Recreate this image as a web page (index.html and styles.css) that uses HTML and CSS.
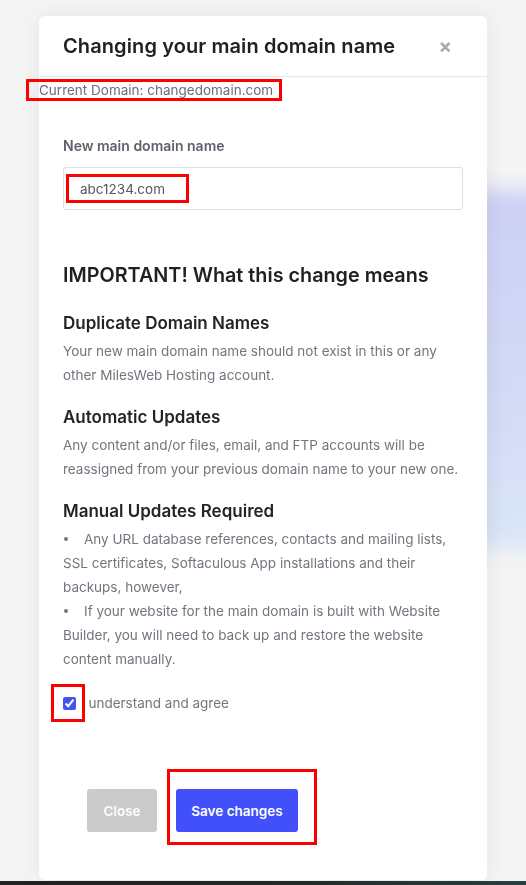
FILE: index.html
```html
<!DOCTYPE html>
<html lang="en">
<head>
    <meta charset="UTF-8">
    <meta name="viewport" content="width=device-width, initial-scale=1.0">
    <title>Change main domain</title>
    <link rel="stylesheet" href="styles.css">
</head>
<body>
    <!-- blurred shape behind the dialog -->
    <div class="backdrop-blob"></div>

    <div class="modal">
        <div class="modal-header">
            <h1 class="modal-title">Changing your main domain name</h1>
            <button class="close-btn" type="button">&times;</button>
        </div>

        <div class="current-domain">
            <span class="mark mark-domain">Current Domain: changedomain.com</span>
        </div>

        <div class="modal-body">
            <label class="field-label" for="newDomain">New main domain name</label>
            <div class="input-wrap mark mark-input">
                <input type="text" id="newDomain" class="field-input" value="abc1234.com">
            </div>

            <h2 class="important">IMPORTANT! What this change means</h2>

            <h3 class="section-title">Duplicate Domain Names</h3>
            <p class="section-text">Your new main domain name should not exist in this or any other MilesWeb Hosting account.</p>

            <h3 class="section-title">Automatic Updates</h3>
            <p class="section-text">Any content and/or files, email, and FTP accounts will be reassigned from your previous domain name to your new one.</p>

            <h3 class="section-title">Manual Updates Required</h3>
            <div class="section-text">
                <div><span class="dot"></span>Any URL database references, contacts and mailing lists, SSL certificates, Softaculous App installations and their backups, however,</div>
                <div><span class="dot"></span>If your website for the main domain is built with Website Builder, you will need to back up and restore the website content manually.</div>
            </div>

            <label class="agree mark mark-check">
                <input type="checkbox" checked>
                <span>I understand and agree</span>
            </label>
        </div>

        <div class="modal-footer">
            <button class="btn btn-close" type="button">Close</button>
            <button class="btn btn-save mark mark-save" type="button">Save changes</button>
        </div>
    </div>

    <div class="bottom-bar"></div>
</body>
</html>
```

FILE: styles.css
```css
body {
    margin: 0;
    height: 885px;
    overflow: hidden;
    background-color: #f5f5f6;
    font-family: Inter, "Liberation Sans", sans-serif;
    color: #222;
}

.backdrop-blob {
    position: fixed;
    left: 470px;
    top: 190px;
    width: 120px;
    height: 360px;
    background: linear-gradient(180deg, #cdd0f5 0%, #d3dbf6 60%, #dbe6f7 100%);
    filter: blur(10px);
}

.modal {
    position: relative;
    margin: 16px 0 0 39px;
    width: 448px;
    height: 864px;
    background-color: #fff;
    border-radius: 6px;
    box-shadow: 0 0 24px rgba(0, 0, 0, 0.08);
}

.modal-header {
    display: flex;
    align-items: center;
    justify-content: space-between;
    height: 60px;
    padding: 0 35px 0 24px;
    border-bottom: 1px solid #e6e6e8;
}

.modal-title {
    margin: 0;
    font-size: 20px;
    font-weight: 600;
    color: #1f1f24;
    letter-spacing: 0.1px;
}

.close-btn {
    border: none;
    background: none;
    padding: 0;
    font-family: inherit;
    font-size: 20px;
    font-weight: 700;
    color: #acacb0;
    line-height: 1;
    cursor: pointer;
}

.current-domain {
    margin-top: 3px;
    line-height: 20px;
    font-size: 13.5px;
    color: #6b6e78;
}

/* red annotation frames */
.mark {
    position: relative;
}

.mark::after {
    content: "";
    position: absolute;
    border: 3px solid #f00;
    pointer-events: none;
}

.mark-domain {
    display: inline-block;
}

.mark-domain::after {
    left: -13px;
    right: -9px;
    top: -1px;
    bottom: -1px;
}

.mark-input::after {
    left: 3px;
    top: 7px;
    width: 117px;
    height: 23px;
}

.mark-check::after {
    left: -12px;
    top: -9px;
    width: 28px;
    height: 32px;
}

.mark-save::after {
    left: -9px;
    right: -19px;
    top: -20px;
    bottom: -13px;
}

.modal-body {
    padding: 36px 24px 0 24px;
}

.field-label {
    display: block;
    font-size: 14px;
    font-weight: 600;
    line-height: 20px;
    color: #5f616b;
}

.input-wrap {
    margin-top: 11px;
}

.field-input {
    box-sizing: border-box;
    width: 400px;
    height: 43px;
    padding: 0 16px;
    border: 1px solid #dedee2;
    border-radius: 3px;
    font-family: inherit;
    font-size: 13.5px;
    color: #55575f;
    outline: none;
}

.important {
    margin: 51px 0 0 0;
    font-size: 19.8px;
    font-weight: 600;
    line-height: 28px;
    color: #1f1f24;
}

.section-title {
    margin: 22px 0 0 0;
    font-size: 17px;
    font-weight: 600;
    line-height: 24px;
    color: #23232a;
}

.section-text + .section-title {
    margin-top: 18px;
}

.section-text {
    margin: 4px 0 0 0;
    font-size: 13.5px;
    line-height: 24px;
    color: #73757f;
}

.dot {
    display: inline-block;
    width: 4px;
    height: 4px;
    margin: 0 16px 2px 1px;
    border-radius: 50%;
    background-color: #73757f;
    vertical-align: middle;
}

.agree {
    display: flex;
    align-items: center;
    gap: 5px;
    margin-top: 22px;
    line-height: 20px;
    font-size: 13.5px;
    color: #73757f;
}

.agree input {
    margin: 0;
    width: 13px;
    height: 13px;
    accent-color: #4353f4;
}

.modal-footer {
    display: flex;
    gap: 19px;
    padding: 76px 0 0 48px;
}

.btn {
    height: 43px;
    border: none;
    border-radius: 3px;
    font-family: inherit;
    font-size: 13.5px;
    font-weight: 600;
    color: #fff;
    cursor: pointer;
}

.btn-close {
    width: 70px;
    background-color: #cbcbcb;
}

.btn-save {
    width: 122px;
    background-color: #4150fb;
}

.bottom-bar {
    margin-top: 1px;
    height: 4px;
    background: linear-gradient(90deg, #212121 0%, #242a28 50%, #2b3e3f 100%);
}
```
